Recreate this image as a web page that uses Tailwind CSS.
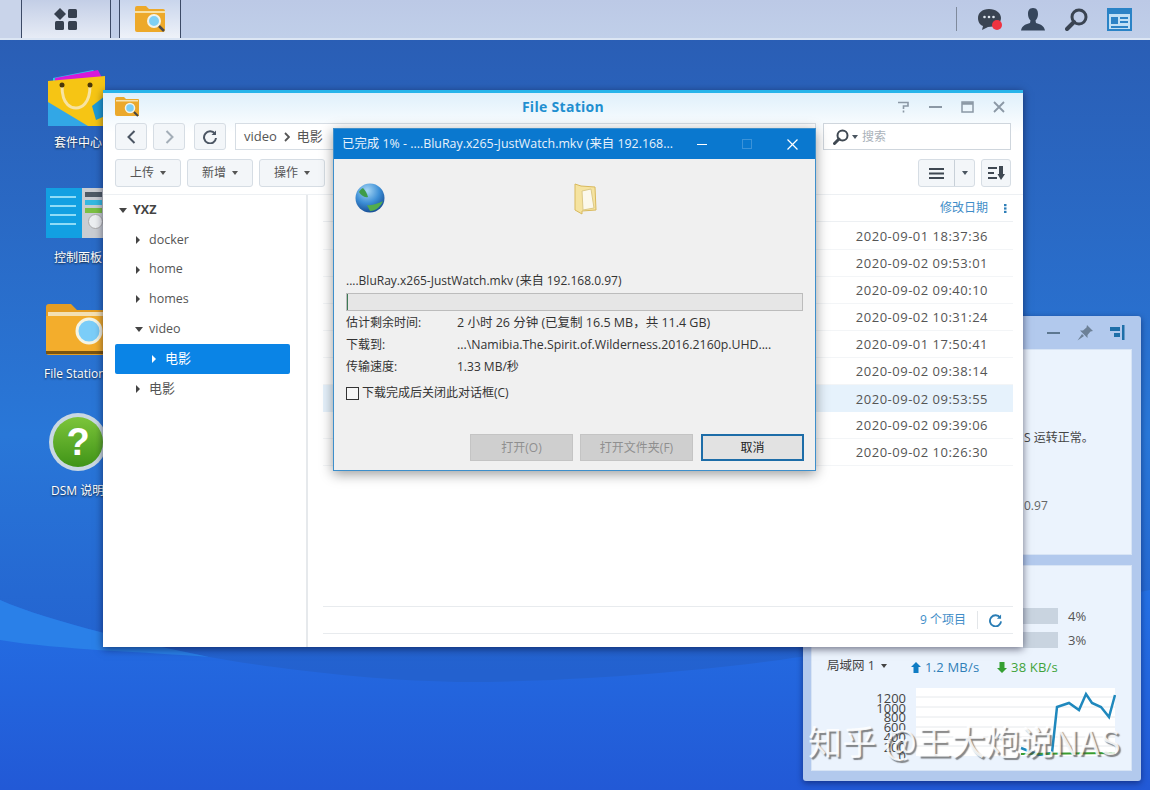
<!DOCTYPE html>
<html lang="zh">
<head>
<meta charset="utf-8">
<script src="https://cdn.jsdelivr.net/npm/@tailwindcss/browser@4"></script>
<title>File Station</title>
</head>
<body class="m-0">
<div class="relative w-[1150px] h-[790px] overflow-hidden text-[12px] text-[#555] font-['Open_Sans','Noto_Sans_CJK_SC',sans-serif] bg-[linear-gradient(180deg,#2a5eb5_5%,#2977d8_55%,#2361cf_85%)]">

  <!-- wallpaper -->
  <svg class="absolute inset-0" width="1150" height="790" viewBox="0 0 1150 790">
    <defs>
      <linearGradient id="deep" x1="0" y1="0" x2="0" y2="1"><stop offset="0" stop-color="#2470e4"/><stop offset="1" stop-color="#2259d6"/></linearGradient>
    </defs>
    <path d="M0 600 C50 622 150 645 209 657 C270 668 380 682 470 682 C560 682 700 672 800 657 C900 642 1050 610 1150 590 L1150 790 L0 790 Z" fill="url(#deep)"/>
    <path d="M0 600 C50 622 150 645 209 657 C150 652 60 650 0 640 Z" fill="#2a80e8"/>
  </svg>

  <!-- taskbar -->
  <div class="absolute top-0 left-0 w-full h-[40px] flex items-stretch bg-gradient-to-b from-[#bcc9e6] to-[#c0cfe9] border-b-2 border-[#dce6f4]">
    <div class="w-[21px] bg-[#c9d4ea]"></div>
    <div class="w-[90px] flex items-center justify-center border-x border-[#3c4a66] bg-gradient-to-b from-[#c3cee6] to-[#e7ecf6]">
      <svg width="26" height="24" viewBox="0 0 26 24" fill="#36404f">
        <path d="M7 1 L13 7 L7 13 L1 7 Z"/>
        <rect x="15" y="2" width="9" height="9" rx="1.5"/>
        <rect x="2" y="14" width="9" height="9" rx="1.5"/>
        <rect x="15" y="14" width="9" height="9" rx="1.5"/>
      </svg>
    </div>
    <div class="w-[8px]"></div>
    <div class="w-[62px] flex items-center justify-center border-x border-[#3c4a66] bg-gradient-to-b from-[#c9d5ec] to-[#eef2f9]">
      <svg width="32" height="28" viewBox="0 0 32 28">
        <path d="M1 3 a2 2 0 0 1 2-2 h9 l3 3 h14 a2 2 0 0 1 2 2 v19 a2 2 0 0 1-2 2 h-26 a2 2 0 0 1-2-2 Z" fill="#eda92a"/>
        <rect x="1" y="6" width="30" height="2" fill="#f7e1a6"/>
        <circle cx="20" cy="16" r="6" fill="#7fd0f5" stroke="#f3f3ea" stroke-width="2"/>
        <path d="M25 21 L30 26" stroke="#4a4a4a" stroke-width="2.5"/>
      </svg>
    </div>
    <div class="flex-1"></div>
    <div class="flex items-center pr-[18px]">
      <div class="w-px h-[24px] bg-[#7f8a9c] mr-[21px]"></div>
      <svg class="mr-[18px]" width="25" height="25" viewBox="0 0 25 25">
        <path d="M11 2 C4 2 0 6 0 11 C0 15 2 18 5 19 L4 23 L10 20 C17 20 23 17 23 11 C23 6 18 2 11 2 Z" fill="#3a4452"/>
        <circle cx="6.5" cy="10" r="1.3" fill="#dfe6ee"/><circle cx="11" cy="10" r="1.3" fill="#dfe6ee"/><circle cx="15.5" cy="10" r="1.3" fill="#dfe6ee"/>
        <circle cx="19" cy="18" r="5" fill="#ef3340"/>
      </svg>
      <svg class="mr-[20px]" width="24" height="23" viewBox="0 0 24 23" fill="#36465c">
        <path d="M12 0 C8 0 7 3 7 6 C7 9 8 11 9.500 12.500 L9 15 C5 16 1 17.500 0 22.500 L24 22.500 C23 17.500 19 16 15 15 L14.500 12.500 C16 11 17 9 17 6 C17 3 16 0 12 0 Z"/>
      </svg>
      <svg class="mr-[19px]" width="23" height="23" viewBox="0 0 23 23" fill="none" stroke="#3a4452">
        <circle cx="14" cy="9" r="7" stroke-width="3"/>
        <path d="M9 14 L2 21" stroke-width="4" stroke-linecap="round"/>
      </svg>
      <svg width="25" height="23" viewBox="0 0 25 23">
        <rect x="1" y="1" width="23" height="21" fill="#bfe0f5" stroke="#2a83c6" stroke-width="2"/>
        <rect x="1" y="1" width="23" height="5" fill="#2a83c6"/>
        <rect x="4" y="9" width="7" height="7" fill="#2a83c6"/>
        <rect x="13" y="9" width="8" height="2" fill="#2a83c6"/>
        <rect x="13" y="13" width="8" height="2" fill="#2a83c6"/>
        <rect x="4" y="18" width="17" height="2" fill="#2a83c6"/>
      </svg>
    </div>
  </div>

  <!-- desktop icons -->
  <div class="absolute left-[48px] top-[68px] w-[57px] h-[58px]">
    <svg width="57" height="58" viewBox="0 0 57 58">
      <path d="M5 10 L45 2 L57 14 L57 30 L5 30 Z" fill="#2fc6e8"/>
      <path d="M7 10 L50 2 L56 14 L7 14 Z" fill="#d719d9"/>
      <path d="M0 13 L57 8 L57 58 L0 58 Z" fill="#f6c514"/>
      <path d="M0 34 L40 58 L0 58 Z" fill="#32a7e6"/>
      <path d="M44 38 L57 28 L57 48 L48 52 Z" fill="#1d9bd6"/>
      <path d="M14 18 C14 38 24 40 28 40 C33 40 42 36 42 18" fill="none" stroke="#f7e3a2" stroke-width="3"/>
      <circle cx="14" cy="17" r="2.500" fill="#4a3608"/><circle cx="42" cy="17" r="2.500" fill="#4a3608"/>
    </svg>
  </div>
  <div class="absolute left-[54px] top-[134px] text-white whitespace-nowrap [text-shadow:0_1px_2px_#123]">套件中心</div>

  <div class="absolute left-[46px] top-[188px] w-[59px] h-[50px] flex overflow-hidden">
    <div class="w-[36px] bg-[#12a0e2] flex flex-col gap-[7px] pt-[8px] pl-[4px]">
      <div class="w-[26px] h-[2px] bg-[#8fdcf7]"></div><div class="w-[26px] h-[2px] bg-[#8fdcf7]"></div><div class="w-[26px] h-[2px] bg-[#8fdcf7]"></div><div class="w-[26px] h-[2px] bg-[#8fdcf7]"></div>
    </div>
    <div class="flex-1 bg-[#c9cdd2] flex flex-col gap-[3px] pt-[4px] px-[3px] relative">
      <div class="h-[5px] bg-[#4f5b66]"></div><div class="h-[5px] bg-[#36b8e0]"></div><div class="h-[5px] bg-[#7cc044]"></div>
      <div class="absolute left-[6px] top-[26px] w-[15px] h-[15px] rounded-full bg-[#eceff1] border border-[#aaa]"></div>
    </div>
  </div>
  <div class="absolute left-[54px] top-[249px] text-white whitespace-nowrap [text-shadow:0_1px_2px_#123]">控制面板</div>

  <div class="absolute left-[46px] top-[304px] w-[59px] h-[51px]">
    <svg width="59" height="51" viewBox="0 0 59 51">
      <path d="M0 3 a3 3 0 0 1 3-3 h22 l6 6 h28 v45 h-56 a3 3 0 0 1-3-3 Z" fill="#e49d22"/>
      <rect x="2" y="8" width="57" height="4" fill="#f3e0b4"/>
      <path d="M0 12 h59 v36 h-59 Z" fill="#f3ad2c"/>
      <rect x="0" y="47" width="59" height="3" fill="#7a5410"/>
      <circle cx="43" cy="27" r="12" fill="#7bcdf8" stroke="#f4f4e4" stroke-width="3"/>
    </svg>
  </div>
  <div class="absolute left-[44px] top-[365px] text-white whitespace-nowrap [text-shadow:0_1px_2px_#123]">File Station</div>

  <div class="absolute left-[49px] top-[413px] w-[58px] h-[58px] rounded-full bg-[#c9d8e2] p-[4px]">
    <div class="w-full h-full rounded-full bg-gradient-to-b from-[#7cc53a] to-[#3f9417] flex items-center justify-center text-white text-[38px] font-bold leading-none font-['Liberation_Sans',sans-serif]">?</div>
  </div>
  <div class="absolute left-[51px] top-[482px] text-white whitespace-nowrap [text-shadow:0_1px_2px_#123]">DSM 说明</div>

  <!-- widget panel -->
  <div class="absolute left-[803px] top-[316px] w-[338px] h-[465px] bg-[#b2c9ed] rounded-[3px] shadow-[0_2px_6px_rgba(0,0,40,0.45)] pl-[8px] pr-[9px] flex flex-col">
    <div class="h-[33px] flex items-center justify-end gap-[17px] pr-[7px] shrink-0">
      <div class="w-[13px] h-[2px] bg-[#5d7790]"></div>
      <svg width="16" height="16" viewBox="0 0 16 16" fill="#6d8197"><path d="M10 0 L16 6 L13.500 6.500 L10.500 10 L10.500 13 L3 5.500 L6 5.500 L9.500 2.500 Z"/><path d="M5 9 L0.500 15.500 L7 11 Z"/></svg>
      <svg width="15" height="15" viewBox="0 0 15 15" fill="#1e6fa8"><rect x="0" y="2" width="10" height="4"/><rect x="4" y="8" width="6" height="4"/><rect x="12" y="0" width="2.500" height="15"/></svg>
    </div>
    <div class="h-[206px] bg-[#ebf3fd] border border-[#d7e4f5] relative text-[#444] shrink-0">
      <div class="absolute left-[212px] top-[79px] whitespace-nowrap">S 运转正常。</div>
      <div class="absolute left-[212px] top-[147px] whitespace-nowrap text-[#666]">0.97</div>
    </div>
    <div class="h-[10px] shrink-0"></div>
    <div class="h-[206px] bg-[#ebf3fd] border border-[#d7e4f5] relative shrink-0">
      <div class="absolute left-[211px] top-[42px] w-[35px] h-[16px] bg-[#c9d4e0]"></div>
      <div class="absolute left-[256px] top-[41px] text-[13px] text-[#555]">4%</div>
      <div class="absolute left-[211px] top-[66px] w-[35px] h-[16px] bg-[#c9d4e0]"></div>
      <div class="absolute left-[256px] top-[65px] text-[13px] text-[#555]">3%</div>

      <div class="absolute left-[15px] top-[91px] flex items-center gap-[6px] text-[#444] text-[12.5px] whitespace-nowrap">局域网 1
        <span class="w-0 h-0 border-x-[3px] border-x-transparent border-t-[4px] border-t-[#444]"></span>
      </div>
      <div class="absolute left-[99px] top-[92px] flex items-center gap-[4px] text-[13px] tracking-[0.2px] text-[#2f7fb8] whitespace-nowrap">
        <svg width="10" height="11" viewBox="0 0 10 11" fill="#0f7cc4"><path d="M5 0 L10 5 L7.500 5 L7.500 11 L2.500 11 L2.500 5 L0 5 Z"/></svg>1.2 MB/s
      </div>
      <div class="absolute left-[185px] top-[92px] flex items-center gap-[4px] text-[13px] tracking-[0.2px] text-[#3fa33a] whitespace-nowrap">
        <svg width="10" height="11" viewBox="0 0 10 11" fill="#35a032"><path d="M5 11 L10 6 L7.500 6 L7.500 0 L2.500 0 L2.500 6 L0 6 Z"/></svg>38 KB/s
      </div>

      <div class="absolute left-[44px] top-[128px] w-[50px] text-right text-[13px] leading-[9.7px] text-[#444] flex flex-col">
        <span>1200</span><span>1000</span><span>800</span><span>600</span><span>400</span><span>200</span><span>0</span>
      </div>
      <svg class="absolute left-[104px] top-[122px]" width="200" height="68" viewBox="0 0 200 68">
        <rect width="199" height="68" fill="#fff"/>
        <path d="M0 9 H199 M0 19 H199 M0 29 H199 M0 39 H199 M0 49 H199 M0 58 H199" stroke="#e6e9ec" fill="none"/>
        <path d="M105 60 L123 67 L136 65 L141 19 L153 15 L163 22 L170 6 L176 15 L185 19 L193 29 L199 7" fill="none" stroke="#1f88bd" stroke-width="2.500"/>
        <path d="M105 66 L199 65" fill="none" stroke="#3a9d2f" stroke-width="2"/>
      </svg>
    </div>
  </div>

  <!-- File Station window -->
  <div class="absolute left-[103px] top-[90px] w-[920px] h-[557px] bg-white shadow-[0_2px_8px_rgba(0,0,30,0.55)] border-t-[3px] border-[#27b4ea] flex flex-col">
    <div class="absolute left-0 right-0 top-0 h-[40px] bg-gradient-to-b from-[#dff0fb] to-white"></div>
    <!-- title -->
    <div class="relative h-[27px] shrink-0 flex items-center justify-between pl-[12px] pr-[18px]">
      <svg width="24" height="20" viewBox="0 0 24 20">
        <path d="M0 2 a2 2 0 0 1 2-2 h7 l2 2 h12 a1 1 0 0 1 1 1 v16 h-22 a2 2 0 0 1-2-2 Z" fill="#eba92c"/>
        <rect x="1" y="3" width="22" height="1.500" fill="#f7e3b0"/>
        <circle cx="15" cy="11" r="4.500" fill="#7ccff5" stroke="#f3f3ea" stroke-width="1.500"/>
        <path d="M19 15 L23 19" stroke="#444" stroke-width="2"/>
      </svg>
      <div class="absolute inset-x-0 text-center text-[14px] tracking-[0.3px] font-bold text-[#1f8fd0]">File Station</div>
      <div class="relative flex items-center gap-[19px] text-[#8b98a5]">
        <svg width="13" height="12" viewBox="0 0 13 12" fill="none" stroke="#8b98a5" stroke-width="1.600"><path d="M1 1.500 H11 L11 5 H6.500 V8"/><path d="M6.500 9.500 V11.500"/></svg>
        <div class="w-[13px] h-[2px] bg-[#8b98a5]"></div>
        <svg width="13" height="12" viewBox="0 0 13 12" fill="none" stroke="#8b98a5" stroke-width="1.500"><rect x="1" y="1" width="11" height="10"/><path d="M1 2.500 H12" stroke-width="2.500"/></svg>
        <svg width="12" height="12" viewBox="0 0 12 12" fill="none" stroke="#8b98a5" stroke-width="1.800"><path d="M1 1 L11 11 M11 1 L1 11"/></svg>
      </div>
    </div>

    <!-- nav row -->
    <div class="relative h-[39px] shrink-0 flex items-start pl-[12px] pr-[12px] pt-[3px]">
      <div class="w-[32px] h-[27px] rounded-[3px] border border-[#d6dde4] bg-[#f3f6f9] flex items-center justify-center">
        <svg width="9" height="14" viewBox="0 0 9 14" fill="none" stroke="#4b5563" stroke-width="2"><path d="M7.500 1 L1.500 7 L7.500 13"/></svg>
      </div>
      <div class="ml-[6px] w-[32px] h-[27px] rounded-[3px] border border-[#d6dde4] bg-[#f3f6f9] flex items-center justify-center">
        <svg width="9" height="14" viewBox="0 0 9 14" fill="none" stroke="#a3adb7" stroke-width="2"><path d="M1.500 1 L7.500 7 L1.500 13"/></svg>
      </div>
      <div class="ml-[9px] w-[32px] h-[27px] rounded-[3px] border border-[#d6dde4] bg-[#f3f6f9] flex items-center justify-center">
        <svg width="14" height="14" viewBox="0 0 14 14" fill="none" stroke="#4b5563" stroke-width="2"><path d="M12 4 A6 6 0 1 0 13 8"/><path d="M13 0.500 V5 H8.500" fill="#4b5563" stroke="none"/></svg>
      </div>
      <div class="ml-[9px] w-[581px] h-[27px] border border-[#d6dde4] bg-white flex items-center pl-[8px] gap-[7px] text-[13px] text-[#555]">
        <span>video</span>
        <svg width="6" height="10" viewBox="0 0 6 10" fill="none" stroke="#555" stroke-width="1.800"><path d="M1 1 L5 5 L1 9"/></svg>
        <span>电影</span>
      </div>
      <div class="ml-[7px] w-[188px] h-[27px] border border-[#cfd6dd] bg-white flex items-center pl-[9px] text-[#aab2ba]">
        <svg width="16" height="16" viewBox="0 0 16 16" fill="none" stroke="#3f4852"><circle cx="9.500" cy="6.500" r="5" stroke-width="2"/><path d="M6 10 L1.500 14.500" stroke-width="3" stroke-linecap="round"/></svg>
        <span class="ml-[3px] mr-[4px] w-0 h-0 border-x-[3px] border-x-transparent border-t-[4px] border-t-[#4a5560]"></span>
        <span>搜索</span>
      </div>
    </div>

    <!-- action row -->
    <div class="relative h-[36px] shrink-0 flex items-start pl-[12px] pr-[12px] border-b border-[#edf0f3]">
      <div class="w-[66px] h-[28px] rounded-[3px] border border-[#d6dde4] bg-[#f3f6f9] flex items-center justify-center gap-[6px] text-[#555]">上传<span class="w-0 h-0 border-x-[3px] border-x-transparent border-t-[4px] border-t-[#555]"></span></div>
      <div class="ml-[6px] w-[66px] h-[28px] rounded-[3px] border border-[#d6dde4] bg-[#f3f6f9] flex items-center justify-center gap-[6px] text-[#555]">新增<span class="w-0 h-0 border-x-[3px] border-x-transparent border-t-[4px] border-t-[#555]"></span></div>
      <div class="ml-[6px] w-[66px] h-[28px] rounded-[3px] border border-[#d6dde4] bg-[#f3f6f9] flex items-center justify-center gap-[6px] text-[#555]">操作<span class="w-0 h-0 border-x-[3px] border-x-transparent border-t-[4px] border-t-[#555]"></span></div>
      <div class="flex-1"></div>
      <div class="w-[57px] h-[28px] rounded-[3px] border border-[#d6dde4] bg-[#f3f6f9] flex items-stretch">
        <div class="flex-1 flex items-center justify-center border-r border-[#c8d0d8]">
          <svg width="15" height="11" viewBox="0 0 15 11" fill="#3f4852"><rect width="15" height="2"/><rect y="4.500" width="15" height="2"/><rect y="9" width="15" height="2"/></svg>
        </div>
        <div class="w-[19px] flex items-center justify-center"><span class="w-0 h-0 border-x-[3px] border-x-transparent border-t-[4px] border-t-[#4a5560]"></span></div>
      </div>
      <div class="ml-[6px] w-[30px] h-[28px] rounded-[3px] border border-[#d6dde4] bg-[#f3f6f9] flex items-center justify-center">
        <svg width="17" height="14" viewBox="0 0 17 14" fill="#3f4852"><rect y="1" width="9" height="2"/><rect y="6" width="6" height="2"/><rect y="11" width="9" height="2"/><path d="M11 0 H15 V8 H17 L13 14 L9.500 8 H11 Z"/></svg>
      </div>
    </div>

    <!-- body -->
    <div class="relative flex-1 flex min-h-0">
      <div class="w-[205px] shrink-0 border-r-2 border-[#e6e9ec] pl-[12px] pr-[16px] pt-[1px] text-[12.5px] text-[#555]">
        <div class="h-[29px] flex items-center font-bold text-[#444] pl-[4px]"><span class="w-0 h-0 border-x-[4px] border-x-transparent border-t-[5px] border-t-[#444] mr-[6px]"></span>YXZ</div>
        <div class="h-[30px] flex items-center pl-[21px]"><span class="w-0 h-0 border-y-[4px] border-y-transparent border-l-[4px] border-l-[#444] mr-[9px]"></span>docker</div>
        <div class="h-[29px] flex items-center pl-[21px]"><span class="w-0 h-0 border-y-[4px] border-y-transparent border-l-[4px] border-l-[#444] mr-[9px]"></span>home</div>
        <div class="h-[30px] flex items-center pl-[21px]"><span class="w-0 h-0 border-y-[4px] border-y-transparent border-l-[4px] border-l-[#444] mr-[9px]"></span>homes</div>
        <div class="h-[30px] flex items-center pl-[20px]"><span class="w-0 h-0 border-x-[4px] border-x-transparent border-t-[5px] border-t-[#444] mr-[6px]"></span>video</div>
        <div class="h-[30px] flex items-center pl-[37px] bg-[#0a84e6] rounded-[2px] text-white text-[13px]"><span class="w-0 h-0 border-y-[4px] border-y-transparent border-l-[4px] border-l-white mr-[9px]"></span>电影</div>
        <div class="h-[30px] flex items-center pl-[21px] text-[13px]"><span class="w-0 h-0 border-y-[4px] border-y-transparent border-l-[4px] border-l-[#444] mr-[9px]"></span>电影</div>
      </div>
      <div class="ml-[15px] w-[690px] flex flex-col">
        <div class="h-[27px] shrink-0 flex items-center justify-end border-b border-[#edf0f3] text-[#3f8dc8] pr-[6px]">
          <span class="mr-[16px]">修改日期</span>
          <svg width="3" height="9" viewBox="0 0 3 9" fill="#2f7fb8"><rect width="2.500" height="2.200"/><rect y="3.400" width="2.500" height="2.200"/><rect y="6.800" width="2.500" height="2.200"/></svg>
        </div>
        <div class="mt-[1px] text-[13px] text-[#555] tracking-[0.5px]">
          <div class="h-[27px] flex items-center justify-end pr-[25px] pt-[2px] border-b border-[#f3f5f7]">2020-09-01 18:37:36</div>
          <div class="h-[27px] flex items-center justify-end pr-[25px] pt-[2px] border-b border-[#f3f5f7]">2020-09-02 09:53:01</div>
          <div class="h-[27px] flex items-center justify-end pr-[25px] pt-[2px] border-b border-[#f3f5f7]">2020-09-02 09:40:10</div>
          <div class="h-[27px] flex items-center justify-end pr-[25px] pt-[2px] border-b border-[#f3f5f7]">2020-09-02 10:31:24</div>
          <div class="h-[27px] flex items-center justify-end pr-[25px] pt-[2px] border-b border-[#f3f5f7]">2020-09-01 17:50:41</div>
          <div class="h-[27px] flex items-center justify-end pr-[25px] pt-[2px] border-b border-[#f3f5f7]">2020-09-02 09:38:14</div>
          <div class="h-[27px] flex items-center justify-end pr-[25px] pt-[2px] bg-[#e6f2fc]">2020-09-02 09:53:55</div>
          <div class="h-[27px] flex items-center justify-end pr-[25px] pt-[2px] border-b border-[#f3f5f7]">2020-09-02 09:39:06</div>
          <div class="h-[27px] flex items-center justify-end pr-[25px] pt-[2px] border-b border-[#f3f5f7]">2020-09-02 10:26:30</div>
        </div>
        <div class="flex-1"></div>
        <div class="h-[28px] shrink-0 flex items-center justify-end border-y border-[#e8ebee] mb-[13px] text-[#3f8dc8] pr-[11px]">
          <span>9 个项目</span>
          <div class="w-px h-[18px] bg-[#e3e6e9] mx-[11px]"></div>
          <svg width="13" height="13" viewBox="0 0 14 14" fill="none" stroke="#2a7db5" stroke-width="2"><path d="M12 4 A6 6 0 1 0 13 8"/><path d="M13 0.500 V5 H8.500" fill="#2a7db5" stroke="none"/></svg>
        </div>
      </div>
    </div>
  </div>

  <!-- download dialog -->
  <div class="absolute left-[333px] top-[128px] w-[483px] h-[343px] bg-[#f0f0f0] border border-[#3e8fcb] shadow-[0_3px_12px_rgba(0,0,0,0.4)] flex flex-col text-[#333] font-['Open_Sans','Noto_Sans_CJK_SC',sans-serif]">
    <div class="h-[30px] shrink-0 bg-[#0a78cf] text-[#e8f2fb] flex items-center pl-[8px] pr-[17px]">
      <span class="whitespace-nowrap w-[352px] text-[12.4px]">已完成 1% - ....BluRay.x265-JustWatch.mkv (来自 192.168...</span>
      <div class="w-[10px] h-px bg-white ml-[4px]"></div>
      <div class="w-[10px] h-[10px] border border-[#3b93d9] ml-[35px]"></div>
      <svg class="ml-[35px]" width="11" height="11" viewBox="0 0 11 11" fill="none" stroke="#fff" stroke-width="1.200"><path d="M0.500 0.500 L10.500 10.500 M10.500 0.500 L0.500 10.500"/></svg>
    </div>
    <div class="h-[112px] shrink-0 relative">
      <svg class="absolute left-[21px] top-[24px]" width="30" height="30" viewBox="0 0 30 30">
        <defs><radialGradient id="g" cx="0.400" cy="0.250" r="0.850"><stop offset="0" stop-color="#a9d8f5"/><stop offset="0.500" stop-color="#3d8fd6"/><stop offset="1" stop-color="#0e3d85"/></radialGradient></defs>
        <circle cx="15" cy="15" r="14.500" fill="url(#g)"/>
        <path d="M4 9 C6 12 9 15 13 14 C12 10 10 7 8 5 C6 6 5 7 4 9 Z" fill="#3f9c49"/>
        <path d="M12 22 C17 23 24 20 28 18 C26 23 21 28 15 28 C14 26 13 24 12 22 Z" fill="#53ad4c"/>
      </svg>
      <svg class="absolute left-[240px] top-[24px]" width="23" height="32" viewBox="0 0 23 32">
        <path d="M1 1 L7 3 L21 4 L22 27 L8 28 L8 31 L1 27 Z" fill="#f5e3a0" stroke="#d9b95c"/>
        <path d="M8 8 L17 6 L20 25 L9 27 Z" fill="#fbf8ec" stroke="#dcc988"/>
      </svg>
    </div>
    <div class="px-[12px] flex flex-col">
      <div class="h-[20px] leading-[20px] whitespace-nowrap">....BluRay.x265-JustWatch.mkv (来自 192.168.0.97)</div>
      <div class="mt-[2px] h-[18px] border border-[#bcbcbc] bg-[#e6e6e6] flex">
        <div class="w-px bg-[#3d7a55]"></div>
      </div>
      <div class="mt-[1px] flex flex-col">
        <div class="flex h-[22px] items-center whitespace-nowrap"><span class="w-[111px]">估计剩余时间:</span><span class="text-[12.5px]">2 小时 26 分钟 (已复制 16.5 MB，共 11.4 GB)</span></div>
        <div class="flex h-[22px] items-center whitespace-nowrap"><span class="w-[111px]">下载到:</span><span class="text-[12.3px]">...\Namibia.The.Spirit.of.Wilderness.2016.2160p.UHD....</span></div>
        <div class="flex h-[21px] items-center whitespace-nowrap"><span class="w-[111px]">传输速度:</span><span>1.33 MB/秒</span></div>
      </div>
      <div class="mt-[7px] flex items-center gap-[3px] h-[18px] whitespace-nowrap">
        <span class="w-[13px] h-[13px] border border-[#333] bg-[#f6f6f6]"></span>下载完成后关闭此对话框(C)
      </div>
    </div>
    <div class="flex-1"></div>
    <div class="h-[27px] mb-[9px] flex justify-end pr-[11px] gap-[7px]">
      <div class="w-[103px] bg-[#cfcfcf] border border-[#c4c4c4] flex items-center justify-center text-[#8f8f8f]">打开(O)</div>
      <div class="w-[113px] bg-[#cfcfcf] border border-[#c4c4c4] flex items-center justify-center text-[#8f8f8f]">打开文件夹(F)</div>
      <div class="w-[103px] ml-[1px] bg-[#e2e2e2] border-2 border-[#1d6da8] flex items-center justify-center text-[#222]">取消</div>
    </div>
  </div>

  <!-- watermark -->
  <div class="absolute left-[808px] top-[718px] text-[34px] tracking-[0.3px] leading-[46px] whitespace-nowrap text-white/85 [text-shadow:2px_2px_1px_rgba(70,70,70,0.65)] font-['Noto_Sans_CJK_SC',sans-serif] font-normal">知乎 @王大炮说NAS</div>
</div>
</body>
</html>
